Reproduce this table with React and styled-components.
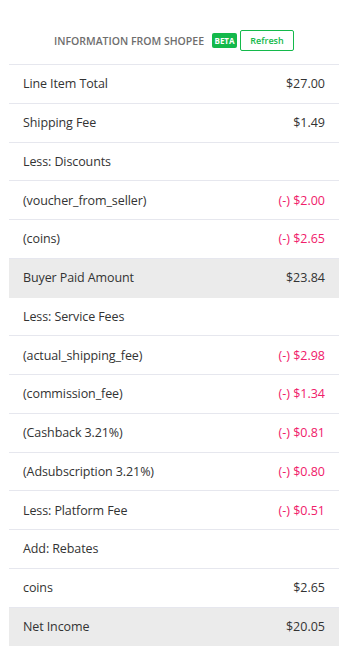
import React from 'react';
import styled, { createGlobalStyle } from 'styled-components';

const GlobalStyle = createGlobalStyle`
    body {
        margin: 0;
        background: #ffffff;
        font-family: "Open Sans", "Noto Sans", sans-serif;
    }
`;

const Panel = styled.div`
    width: 330px;
    padding: 30px 9px 0 9px;
`;

// title, badge and button sit centred over the table
const Header = styled.div`
    display: flex;
    align-items: center;
    justify-content: center;
    height: 21px;
    margin-bottom: 13px;
`;

const Title = styled.span`
    font-size: 10.5px;
    font-weight: 600;
    color: #6e6e6e;
    letter-spacing: 0;
    text-transform: uppercase;
    margin-right: 8px;
`;

const Beta = styled.span`
    box-sizing: border-box;
    width: 25px;
    height: 15px;
    line-height: 15px;
    text-align: center;
    background: #14b94b;
    color: #ffffff;
    font-size: 8px;
    font-weight: 700;
    border-radius: 2px;
    margin-right: 3px;
`;

const RefreshButton = styled.button`
    width: 54px;
    height: 21px;
    padding: 0;
    border: 1px solid #14b94b;
    border-radius: 2px;
    background: #ffffff;
    color: #14b94b;
    font-family: inherit;
    font-size: 9px;
    font-weight: 600;
`;

const Table = styled.div`
    border-top: 1px solid #e6e7ee;
`;

const Row = styled.div`
    display: flex;
    align-items: center;
    justify-content: space-between;
    box-sizing: border-box;
    height: 38.75px;
    padding: 0 14px;
    border-bottom: 1px solid ${({ $highlight }) => ($highlight ? '#ebebeb' : '#e6e7ee')};
    background: ${({ $highlight }) => ($highlight ? '#ebebeb' : '#ffffff')};
    font-size: 12.5px;
    color: #333333;
`;

const Label = styled.span`
    letter-spacing: -0.1px;
`;

const Amount = styled.span`
    color: ${({ $negative }) => ($negative ? '#f0206a' : '#333333')};
`;

const rows = [
    { label: 'Line Item Total', value: '$27.00' },
    { label: 'Shipping Fee', value: '$1.49' },
    { label: 'Less: Discounts' },
    { label: '(voucher_from_seller)', value: '(-) $2.00', negative: true },
    { label: '(coins)', value: '(-) $2.65', negative: true },
    { label: 'Buyer Paid Amount', value: '$23.84', highlight: true },
    { label: 'Less: Service Fees' },
    { label: '(actual_shipping_fee)', value: '(-) $2.98', negative: true },
    { label: '(commission_fee)', value: '(-) $1.34', negative: true },
    { label: '(Cashback 3.21%)', value: '(-) $0.81', negative: true },
    { label: '(Adsubscription 3.21%)', value: '(-) $0.80', negative: true },
    { label: 'Less: Platform Fee', value: '(-) $0.51', negative: true },
    { label: 'Add: Rebates' },
    { label: 'coins', value: '$2.65' },
    { label: 'Net Income', value: '$20.05', highlight: true },
];

function App() {
    return (
        <>
            <GlobalStyle />
            <Panel>
                <Header>
                    <Title>Information from Shopee</Title>
                    <Beta>BETA</Beta>
                    <RefreshButton>Refresh</RefreshButton>
                </Header>
                <Table>
                    {rows.map((row) => (
                        <Row key={row.label} $highlight={row.highlight}>
                            <Label>{row.label}</Label>
                            {row.value && <Amount $negative={row.negative}>{row.value}</Amount>}
                        </Row>
                    ))}
                </Table>
            </Panel>
        </>
    );
}

export default App;
